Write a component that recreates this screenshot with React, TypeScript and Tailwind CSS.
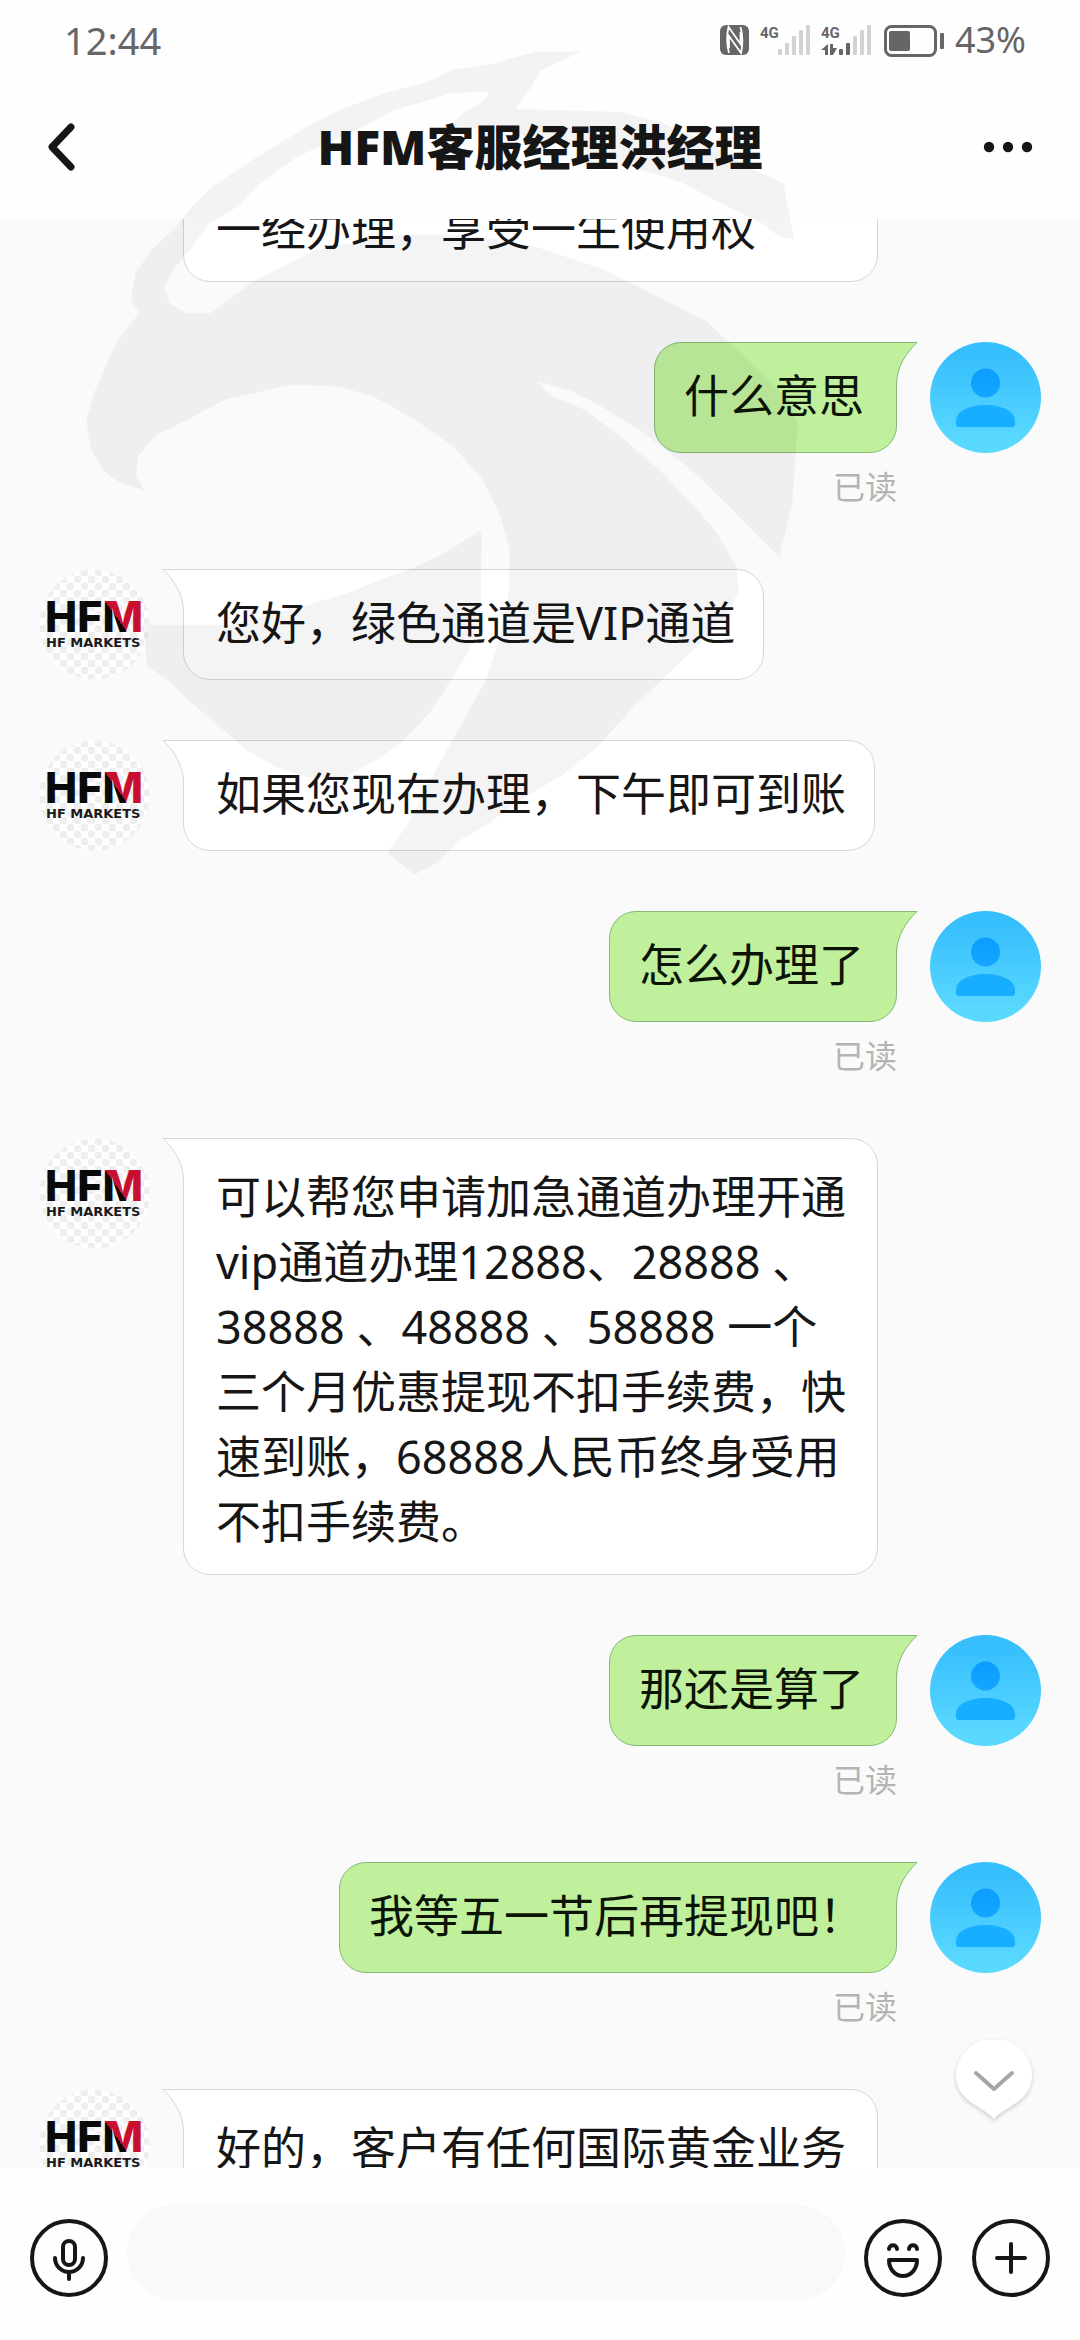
import { useState } from "react"

interface Message {
  id: number
  from: "me" | "agent"
  text: string
  wide?: boolean
  hideAvatar?: boolean
}

const messages: Message[] = [
  { id: 1, from: "agent", text: "一经办理，享受一生使用权", wide: true, hideAvatar: true },
  { id: 2, from: "me", text: "什么意思" },
  { id: 3, from: "agent", text: "您好，绿色通道是VIP通道" },
  { id: 4, from: "agent", text: "如果您现在办理，下午即可到账" },
  { id: 5, from: "me", text: "怎么办理了" },
  {
    id: 6,
    from: "agent",
    text: "可以帮您申请加急通道办理开通vip通道办理12888、28888 、38888 、48888 、58888 一个三个月优惠提现不扣手续费，快速到账，68888人民币终身受用不扣手续费。",
    wide: true
  },
  { id: 7, from: "me", text: "那还是算了" },
  { id: 8, from: "me", text: "我等五一节后再提现吧！" },
  { id: 9, from: "agent", text: "好的，客户有任何国际黄金业务", wide: true }
]

function StatusIcons() {
  return (
    <svg viewBox="0 0 228 40" className="h-10 w-[228px]" aria-hidden="true">
      {/* nfc */}
      <rect x="1" y="5" width="29" height="30" rx="6" fill="#666" />
      <path d="M10 33 Q6.500 20 9.500 7 L21.500 24 V12 M21.500 7 Q25 20 22 33 L10 16 V28" fill="none" stroke="#fff" strokeWidth="1.800" />
      <g fill="#666" fontFamily="'Liberation Sans Narrow', 'Roboto', sans-serif" fontWeight="700" fontSize="15">
        <text x="41" y="18">4G</text>
        <text x="102" y="18">4G</text>
      </g>
      <g fill="#d2d2d2">
        <rect x="59" y="29" width="4" height="6" rx="1" />
        <rect x="66" y="23" width="4" height="12" rx="1" />
        <rect x="73" y="16" width="4" height="19" rx="1" />
        <rect x="80" y="10" width="4" height="25" rx="1" />
        <rect x="87" y="5" width="4" height="30" rx="1" />
        <rect x="134" y="16" width="4" height="19" rx="1" />
        <rect x="141" y="10" width="4" height="25" rx="1" />
        <rect x="148" y="5" width="4" height="30" rx="1" />
      </g>
      <g fill="#666">
        <rect x="120" y="29" width="4" height="6" rx="1" />
        <rect x="127" y="23" width="4" height="12" rx="1" />
        <path d="M109 24 V35 H106 V30 H102 Z M111 24 H114 V28 H118 L114 35 H111 Z" />
        <rect x="170" y="11" width="21" height="20" rx="2" />
        <rect x="221" y="13" width="4" height="16" rx="1" />
      </g>
      <rect x="166.500" y="6.500" width="50" height="29" rx="6" fill="none" stroke="#666" strokeWidth="3" />
    </svg>
  )
}

function AgentAvatar() {
  return (
    <svg viewBox="0 0 111 111" className="size-[111px] shrink-0" role="img" aria-label="HFM">
      <defs>
        <pattern id="checker" width="14" height="14" patternUnits="userSpaceOnUse">
          <rect width="14" height="14" fill="#fefefe" />
          <rect width="7" height="7" rx="2" fill="#eeeeee" />
          <rect x="7" y="7" width="7" height="7" rx="2" fill="#eeeeee" />
        </pattern>
        <linearGradient id="mark" gradientUnits="userSpaceOnUse" x1="51" y1="64" x2="101" y2="28">
          <stop offset="0.5" stopColor="#0a0a0a" />
          <stop offset="0.5" stopColor="#c8102e" />
        </linearGradient>
      </defs>
      <circle cx="55.500" cy="55.500" r="55" fill="url(#checker)" />
      <text x="6" y="63" fontFamily="Inter, sans-serif" fontWeight="800" fontSize="43" fill="#0a0a0a">
        HF<tspan fill="url(#mark)">M</tspan>
      </text>
      <text x="7" y="78" fontFamily="'DejaVu Sans', sans-serif" fontWeight="700" fontSize="13" fill="#1a1a1a">
        HF MARKETS
      </text>
    </svg>
  )
}

function UserAvatar() {
  return (
    <svg viewBox="0 0 111 111" className="size-[111px] shrink-0" role="img" aria-label="我">
      <defs>
        <linearGradient id="sky" x1="0" y1="0" x2="0" y2="1">
          <stop offset="0.1" stopColor="#36befd" />
          <stop offset="0.9" stopColor="#5ad9ff" />
        </linearGradient>
        <linearGradient id="head" x1="0" y1="0" x2="0" y2="1">
          <stop offset="0" stopColor="#0b9dff" />
          <stop offset="1" stopColor="#14a6ff" />
        </linearGradient>
      </defs>
      <circle cx="55.500" cy="55.500" r="55.500" fill="url(#sky)" />
      <circle cx="55.500" cy="41" r="14.500" fill="url(#head)" />
      <path d="M26 79 C26 69 40 63 55.500 63 S85 69 85 79 V82 Q85 85 82 85 H29 Q26 85 26 82 Z" fill="#18aeff" />
    </svg>
  )
}

function Tail({ mine }: { mine: boolean }) {
  return (
    <svg
      viewBox="0 0 24 46"
      aria-hidden="true"
      className={`absolute -top-px h-[46px] w-6 ${mine ? "-right-[22px] -scale-x-100" : "-left-[22px]"}`}
    >
      <path d="M24 0.500 H1 C12 11 21.500 25 21.500 43 V46 H24 Z" fill={mine ? "#c0f09c" : "#fff"} />
      <path d="M24 0.500 H1 C12 11 21.500 25 21.500 43 V46" fill="none" stroke={mine ? "#86b877" : "#d6d6d6"} />
    </svg>
  )
}

function MessageRow({ message }: { message: Message }) {
  const mine = message.from === "me"

  if (mine) {
    return (
      <li className="flex justify-end gap-[33px]">
        <div className="flex flex-col items-end">
          <div className="relative rounded-[27px] rounded-tr-none border border-[#86b877] bg-[#c0f09c] pt-5 pr-8 pb-6 pl-[29px] text-[45px] leading-[65px] text-[#0c1408]">
            <Tail mine />
            {message.text}
          </div>
          <span className="mt-3 text-[32px] leading-[44px] text-[#b4b4b4]">已读</span>
        </div>
        <UserAvatar />
      </li>
    )
  }

  return (
    <li className="flex items-start gap-[33px]">
      {message.hideAvatar ? <div className="w-[111px] shrink-0" /> : <AgentAvatar />}
      <div
        className={`relative max-w-[695px] rounded-[27px] rounded-tl-none border border-[#d6d6d6] bg-white pr-7 pl-8 text-[45px] leading-[65px] text-[#161616] ${
          message.wide ? "w-full pt-[25px] pb-5" : "pt-5 pb-6"
        }`}
      >
        <Tail mine={false} />
        {message.text}
      </div>
    </li>
  )
}

function Watermark() {
  return (
    <svg
      viewBox="0 0 1568 1568"
      preserveAspectRatio="none"
      aria-hidden="true"
      className="pointer-events-none absolute top-10 left-0 h-[860px] w-[900px]"
    >
      <g fill="#000" fillOpacity="0.042">
        <path
          d="M1014 21 L934 21 L854 44 L790 54 L742 77 L670 97 L590 128 L534 158 L478 194 L430 225 L370 267 L334 304 L306 342 L266 380 L236 425 L228 474 L242 498
          L206 547 L186 590 L165 640 L150 695 L158 745 L180 785 L205 805 L252 822 L238 795 L240 760 L270 722 L330 690 L395 655 L460 640 L510 628 L590 632 L650 650 L720 690 L790 742 L840 800 L870 862 L888 930 L886 1010 L868 1100 L845 1170 L808 1240 L770 1310 L745 1360 L710 1430 L675 1482 L722 1522
          L760 1500 L800 1460 L850 1430 L900 1390 L980 1340 L1040 1290 L1100 1220 L1150 1170 L1220 1100 L1265 1050 L1287 1005 L1283 960 L1250 900 L1210 850 L1150 785 L1090 730 L1020 675 L960 648 L935 622
          L1000 642 L1050 670 L1120 715 L1200 780 L1270 850 L1320 905 L1358 942 L1380 850 L1390 700 L1376 660 L1340 620 L1290 570 L1230 512 L1166 478 L1054 419 L934 377 L814 355 L686 355 L550 383 L494 413 L446 437 L398 474 L366 498 L326 498 L295 480 L286 450 L302 419 L334 377 L366 334 L414 304 L454 261 L518 213 L622 164 L686 128 L750 109 L782 97 L854 94
          L838 115 L806 134 L782 156 L880 168 L1000 195 L1118 237 L1190 261 L1246 292 L1326 334 L1358 359 L1384 364 L1370 292 L1366 261 L1320 240 L1240 190 L1150 149 L1078 131 L966 128 L898 125 L926 85 L942 55 Z"
        />
        <path d="M839 893 L780 932 L726 960 L660 985 L615 1005 L528 1033 L440 1055 L400 1066 L250 1066 L256 1140 L300 1175 L330 1205 L380 1250 L430 1295 L480 1325 L540 1345 L600 1345 L660 1310 L700 1280 L750 1225 L790 1160 L818 1110 L838 1040 Z" />
      </g>
    </svg>
  )
}

export default function App() {
  const [draft, setDraft] = useState("")

  return (
    <div className="relative flex h-screen flex-col overflow-hidden bg-[#fefefe] font-['Noto_Sans','Noto_Sans_CJK_SC',sans-serif]" lang="zh-CN">
      <header className="shrink-0">
        <div className="flex h-20 items-center justify-between pr-[54px] pl-16 text-[#666]">
          <span className="text-[38px] leading-none">12:44</span>
          <div className="flex items-center gap-2">
            <StatusIcons />
            <span className="text-[36px] leading-none">43%</span>
          </div>
        </div>
        <div className="flex h-[139px] items-start justify-between px-11 pt-8">
          <button type="button" aria-label="返回" className="flex h-[70px] w-20 items-center justify-start">
            <svg viewBox="0 0 38 54" className="h-[54px] w-[38px]" fill="none" stroke="#161616" strokeWidth="7" strokeLinecap="round" strokeLinejoin="round">
              <path d="M27 7 L8 27 L27 47" />
            </svg>
          </button>
          <h1 className="text-5xl leading-[70px] font-black text-[#161616]">HFM客服经理洪经理</h1>
          <button type="button" aria-label="更多" className="flex h-[70px] w-20 items-center justify-end">
            <svg viewBox="0 0 54 12" className="h-3 w-[54px]" fill="#161616">
              <circle cx="7" cy="6" r="5.200" />
              <circle cx="26" cy="6" r="5.200" />
              <circle cx="45" cy="6" r="5.200" />
            </svg>
          </button>
        </div>
      </header>

      <main className="relative min-h-0 flex-1 overflow-hidden bg-[#fafafa]">
        <ul className="-mt-[49px] flex flex-col gap-[60px] px-[39px]">
          {messages.map((message) => (
            <MessageRow key={message.id} message={message} />
          ))}
        </ul>
        <button type="button" aria-label="回到底部" className="absolute right-11 bottom-10">
          <svg viewBox="0 0 84 88" className="h-[88px] w-[84px] drop-shadow-[0_2px_2px_rgba(0,0,0,0.18)]">
            <path d="M42 79 C34 69 17 65 8 51 A38 36 0 1 1 76 51 C67 65 50 69 42 79 Z" fill="#fff" />
            <path d="M24 33 L42 49 L60 33" fill="none" stroke="#a6a6a6" strokeWidth="4" strokeLinecap="round" strokeLinejoin="round" />
          </svg>
        </button>
      </main>

      <footer className="flex shrink-0 items-end px-[30px] pt-[37px] pb-10">
        <button type="button" aria-label="语音" className="mb-[3px]">
          <svg viewBox="0 0 78 78" className="size-[78px]" fill="none" stroke="#161616" strokeWidth="4" strokeLinecap="round">
            <circle cx="39" cy="39" r="37" />
            <rect x="33" y="22" width="12" height="24" rx="6" />
            <path d="M25 39 A14 14 0 0 0 53 39 M39 53 V60" />
          </svg>
        </button>
        <input
          type="text"
          aria-label="输入消息"
          value={draft}
          onChange={(e) => setDraft(e.target.value)}
          className="mx-[19px] h-[95px] min-w-0 flex-1 rounded-full bg-[#f9f9f9] px-10 text-[45px] outline-none"
        />
        <button type="button" aria-label="表情" className="mr-[30px] mb-[3px]">
          <svg viewBox="0 0 78 78" className="size-[78px]" fill="none" stroke="#161616" strokeWidth="4" strokeLinecap="round" strokeLinejoin="round">
            <circle cx="39" cy="39" r="37" />
            <path d="M25 30 C25 25 33 25 33 30 M45 30 C45 25 53 25 53 30" />
            <path d="M25 41 H53 C53 50 47 57 39 57 S25 50 25 41 Z" />
          </svg>
        </button>
        <button type="button" aria-label="添加" className="mb-[3px]">
          <svg viewBox="0 0 78 78" className="size-[78px]" fill="none" stroke="#161616" strokeWidth="4" strokeLinecap="round">
            <circle cx="39" cy="39" r="37" />
            <path d="M25 39 H53 M39 25 V53" />
          </svg>
        </button>
      </footer>

      <Watermark />
    </div>
  )
}
